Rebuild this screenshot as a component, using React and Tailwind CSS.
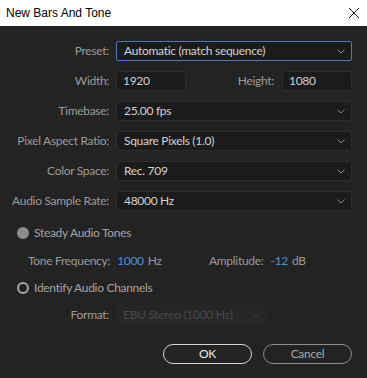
import React from "react";

const Chevron = () => (
  <svg width="8" height="5" viewBox="0 0 8 5" className="shrink-0">
    <path d="M0.5 0.5 L4 4 L7.5 0.5" fill="none" stroke="#8a8a8a" strokeWidth="1" />
  </svg>
);

const Select = ({ value, active, className = "" }) => (
  <div
    className={`h-5 flex items-center justify-between pl-[7px] pr-[6px] rounded-[2px] border bg-[#1b1b1b] ${
      active ? "border-[#4a7ab5]" : "border-[#2c2c2c]"
    } ${className}`}
  >
    <span className="text-[#d2d2d2]">{value}</span>
    <Chevron />
  </div>
);

const Label = ({ children }) => (
  <div className="text-right text-[#9b9b9b] whitespace-nowrap">{children}</div>
);

export default function App() {
  return (
    <div
      className="w-[367px] h-[378px] bg-[#232323] flex flex-col text-[12px] leading-none tracking-[-0.3px]"
      style={{ fontFamily: "Lato, 'Open Sans', sans-serif" }}
    >
      <div
        className="h-[26px] bg-white flex items-center justify-between pl-[6px] pr-[6px] text-black text-[12px] tracking-normal"
        style={{ fontFamily: "'Liberation Sans', Arial, sans-serif" }}
      >
        <span>New Bars And Tone</span>
        <svg width="12" height="12" viewBox="0 0 12 12" className="mr-[1px]">
          <path d="M1 1 L11 11 M11 1 L1 11" stroke="#111" strokeWidth="1" />
        </svg>
      </div>

      <div className="flex flex-col pt-[15px] pr-[15px]">
        <div className="grid grid-cols-[109px_1fr] gap-x-[7px] gap-y-[10px] items-center">
          <Label>Preset:</Label>
          <Select value="Automatic (match sequence)" active />

          <Label>Width:</Label>
          <div className="flex items-center">
            <div className="w-[70px] h-5 flex items-center pl-[6px] rounded-[2px] border border-[#2c2c2c] bg-[#1b1b1b] text-[#d2d2d2]">
              1920
            </div>
            <div className="flex-1 text-right pr-[8px] text-[#9b9b9b]">Height:</div>
            <div className="w-[70px] h-5 flex items-center pl-[6px] rounded-[2px] border border-[#2c2c2c] bg-[#1b1b1b] text-[#d2d2d2]">
              1080
            </div>
          </div>

          <Label>Timebase:</Label>
          <Select value="25.00 fps" />

          <Label>Pixel Aspect Ratio:</Label>
          <Select value="Square Pixels (1.0)" />

          <Label>Color Space:</Label>
          <Select value="Rec. 709" />

          <Label>Audio Sample Rate:</Label>
          <Select value="48000 Hz" />
        </div>

        <div className="flex items-center mt-[16px] pl-[17px] h-[12px]">
          <div className="w-[12px] h-[12px] rounded-full bg-[#8c8c8c]" />
          <span className="ml-[5px] text-[#a3a3a3]">Steady Audio Tones</span>
        </div>

        <div className="flex items-center mt-[16px] pl-[28px] h-[12px]">
          <div className="w-[181px] flex items-center">
            <span className="text-[#9b9b9b]">Tone Frequency:</span>
            <span className="ml-[7px] text-[#4b90d8]">1000</span>
            <span className="ml-[4px] text-[#9b9b9b]">Hz</span>
          </div>
          <span className="text-[#9b9b9b]">Amplitude:</span>
          <span className="ml-[7px] text-[#4b90d8]">-12</span>
          <span className="ml-[4px] text-[#9b9b9b]">dB</span>
        </div>

        <div className="flex items-center mt-[15px] pl-[17px] h-[12px]">
          <div className="w-[12px] h-[12px] rounded-full border-[2px] border-[#a8a8a8]" />
          <span className="ml-[5px] text-[#a3a3a3]">Identify Audio Channels</span>
        </div>

        <div className="grid grid-cols-[109px_150px] gap-x-[7px] items-center mt-[11px]">
          <Label>Format:</Label>
          <div className="h-5 flex items-center justify-between pl-[7px] pr-[6px] rounded-[2px] bg-[#262626] text-[#4a4a4a]">
            <span>EBU Stereo (1000 Hz)</span>
            <svg width="8" height="5" viewBox="0 0 8 5">
              <path d="M0.5 0.5 L4 4 L7.5 0.5" fill="none" stroke="#3e3e3e" strokeWidth="1" />
            </svg>
          </div>
        </div>

        <div className="flex justify-end gap-[11px] mt-[19px]">
          <div className="w-[89px] h-[20px] rounded-full border border-[#d6d6d6] flex items-center justify-center text-[#ececec]">
            OK
          </div>
          <div className="w-[89px] h-[20px] rounded-full border border-[#8e8e8e] flex items-center justify-center text-[#a8a8a8]">
            Cancel
          </div>
        </div>
      </div>
    </div>
  );
}
